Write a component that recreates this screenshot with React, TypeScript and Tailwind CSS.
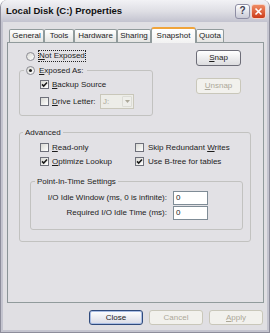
import React from "react";

function Check({ checked }: { checked?: boolean }) {
  return (
    <span className="flex h-[9px] w-[9px] shrink-0 items-center justify-center border border-[#6e707a] bg-gradient-to-br from-[#d9d9d4] to-white">
      {checked && (
        <svg viewBox="0 0 7 7" className="h-[7px] w-[7px]">
          <path d="M1 3.4 L2.7 5.1 L6 1.6" fill="none" stroke="#1a1a1a" strokeWidth="1.5" />
        </svg>
      )}
    </span>
  );
}

function Radio({ checked }: { checked?: boolean }) {
  return (
    <span className="flex h-[9px] w-[9px] shrink-0 items-center justify-center rounded-full border border-[#8c8c94] bg-gradient-to-br from-[#d9d9d4] to-white">
      {checked && <span className="h-[3px] w-[3px] rounded-full bg-[#1e1e1e]" />}
    </span>
  );
}

function Tab({ label, w, active }: { label: string; w: string; active?: boolean }) {
  if (active) {
    return (
      <div
        className={`${w} relative z-10 flex h-[16px] items-start justify-center rounded-t-[3px] border-x border-t-[2px] border-x-[#919b9c] border-t-[#f0a43a] bg-gradient-to-b from-white to-[#f2f2f2] pt-[1px]`}
      >
        {label}
      </div>
    );
  }
  return (
    <div
      className={`${w} mt-[2px] flex h-[13px] items-center justify-center rounded-t-[2px] border-x border-t border-[#919b9c] bg-gradient-to-b from-white to-[#e4e4e2]`}
    >
      {label}
    </div>
  );
}

export default function App() {
  return (
    <div className="flex h-[333px] w-[270px] flex-col overflow-hidden rounded-t-[7px] border-x border-b border-[#8d8d9b] bg-[#e0dfe3] font-['Liberation_Sans',Arial,sans-serif] text-[8px] leading-[12px] text-[#1c1c1c]">
      {/* title bar */}
      <div className="flex h-[22px] shrink-0 items-center bg-gradient-to-b from-[#f2f2f5] via-[#dfdfe5] to-[#c3c3cf] pl-[5px] pr-[3px]">
        <span className="flex-1 text-[9.5px] font-bold text-[#111]">Local Disk (C:) Properties</span>
        <span className="flex h-[15px] w-[15px] items-center justify-center rounded-[3px] border border-[#8e8ea4] bg-gradient-to-b from-white to-[#c9cad6] text-[10px] font-bold text-[#3d3d52]">
          ?
        </span>
        <span className="ml-[1px] flex h-[15px] w-[15px] items-center justify-center rounded-[3px] border border-[#f4d4c8] bg-gradient-to-b from-[#ee8a62] to-[#cc3a17]">
          <svg viewBox="0 0 9 9" className="h-[9px] w-[9px]">
            <path d="M1.5 1.5 L7.5 7.5 M7.5 1.5 L1.5 7.5" stroke="white" strokeWidth="1.6" />
          </svg>
        </span>
      </div>

      {/* client area */}
      <div className="flex flex-1 flex-col border-x-[2px] border-b-[2px] border-[#c4c4cf] pb-[5px] pl-[4px] pr-[3px] pt-[5px]">
        <div className="ml-[2px] flex h-[15px] items-start">
          <Tab label="General" w="w-[35px]" />
          <Tab label="Tools" w="w-[30px]" />
          <Tab label="Hardware" w="w-[43px]" />
          <Tab label="Sharing" w="w-[34px]" />
          <Tab label="Snapshot" w="w-[45px]" active />
          <Tab label="Quota" w="w-[28px]" />
        </div>

        <div className="relative h-[261px] border border-[#919b9c] border-l-[#8b9497] bg-[#e2e1e5]">
          <div className="flex">
            <div className="ml-[11px] w-[134px]">
              <div className="mt-[7px] flex h-[12px] items-center pl-[7px]">
                <Radio />
                <span className="ml-[3px] border border-dotted border-[#222] leading-[10px]">
                  <span className="underline">N</span>ot Exposed
                </span>
              </div>
              <fieldset className="mt-[2px] rounded-[3px] border border-[#c2c2c0] pb-[6px]">
                <legend className="ml-[4px] flex h-[13px] items-center px-[2px]">
                  <Radio checked />
                  <span className="ml-[4px] mr-[2px]">
                    <span className="underline">E</span>xposed As:
                  </span>
                </legend>
                <div className="mt-[1px] flex h-[13px] items-center pl-[20px]">
                  <Check checked />
                  <span className="ml-[3px]">
                    <span className="underline">B</span>ackup Source
                  </span>
                </div>
                <div className="mt-[3px] flex h-[15px] items-center pl-[20px]">
                  <Check />
                  <span className="ml-[3px] w-[48px]">
                    <span className="underline">D</span>rive Letter:
                  </span>
                  <div className="flex h-[15px] w-[34px] border border-[#c9c7ba] bg-[#edede8]">
                    <span className="flex-1 pl-[2px] leading-[13px] text-[#aca899]">J:</span>
                    <span className="m-[1px] flex w-[10px] items-center justify-center rounded-[1px] border border-[#dcdcd6] bg-[#eeeeea]">
                      <svg viewBox="0 0 5 3" className="h-[3px] w-[5px]">
                        <path d="M0 0 H5 L2.5 3 Z" fill="#aca899" />
                      </svg>
                    </span>
                  </div>
                </div>
              </fieldset>
            </div>

            <div className="ml-[43px] flex flex-col">
              <button className="mt-[7px] h-[16px] w-[45px] rounded-[3px] border border-[#6d6d78] bg-gradient-to-b from-white to-[#dcdcdf] leading-[12px]">
                <span className="underline">S</span>nap
              </button>
              <button className="mt-[12px] h-[16px] w-[45px] rounded-[3px] border border-[#c9c7ba] bg-[#f2f1ed] leading-[12px] text-[#aca899]">
                <span className="underline">U</span>nsnap
              </button>
            </div>
          </div>

          <fieldset className="ml-[11px] mt-[10px] w-[232px] rounded-[3px] border border-[#c2c2c0] pb-[11px]">
            <legend className="ml-[3px] flex h-[13px] items-center px-[2px]">Advanced</legend>
            <div className="mt-[2px] flex h-[13px] items-center pl-[20px]">
              <div className="flex w-[95px] items-center">
                <Check />
                <span className="ml-[3px]">
                  <span className="underline">R</span>ead-only
                </span>
              </div>
              <Check />
              <span className="ml-[4px]">
                Skip Redundant <span className="underline">W</span>rites
              </span>
            </div>
            <div className="mt-[1px] flex h-[13px] items-center pl-[20px]">
              <div className="flex w-[95px] items-center">
                <Check checked />
                <span className="ml-[3px]">
                  <span className="underline">O</span>ptimize Lookup
                </span>
              </div>
              <Check checked />
              <span className="ml-[4px]">Use B-tree for tables</span>
            </div>

            <fieldset className="ml-[10px] mt-[7px] w-[213px] rounded-[3px] border border-[#c2c2c0] pb-[9px]">
              <legend className="ml-[4px] flex h-[13px] items-center px-[2px]">Point-In-Time Settings</legend>
              <div className="mt-[3px] flex h-[14px] items-center">
                <span className="w-[136px] text-right">I/O Idle Window (ms, 0 is infinite):</span>
                <span className="ml-[6px] h-[14px] w-[35px] border border-[#7f8c96] bg-white pl-[2px] leading-[12px]">0</span>
              </div>
              <div className="mt-[1px] flex h-[14px] items-center">
                <span className="w-[136px] text-right">Required I/O Idle Time (ms):</span>
                <span className="ml-[6px] h-[14px] w-[35px] border border-[#7f8c96] bg-white pl-[2px] leading-[12px]">0</span>
              </div>
            </fieldset>
          </fieldset>
        </div>

        <div className="mt-[7px] flex h-[15px] justify-end gap-[6px] pr-[1px]">
          <button className="h-[15px] w-[54px] rounded-[3px] border border-[#2f4a7c] bg-gradient-to-b from-white to-[#d9dbe6] leading-[12px] shadow-[inset_0_0_0_1px_#a9bde4]">
            Close
          </button>
          <button className="h-[15px] w-[54px] rounded-[3px] border border-[#c9c7ba] bg-[#f2f1ed] leading-[12px] text-[#aca899]">
            Cancel
          </button>
          <button className="h-[15px] w-[54px] rounded-[3px] border border-[#c9c7ba] bg-[#f2f1ed] leading-[12px] text-[#aca899]">
            <span className="underline">A</span>pply
          </button>
        </div>
      </div>
    </div>
  );
}
